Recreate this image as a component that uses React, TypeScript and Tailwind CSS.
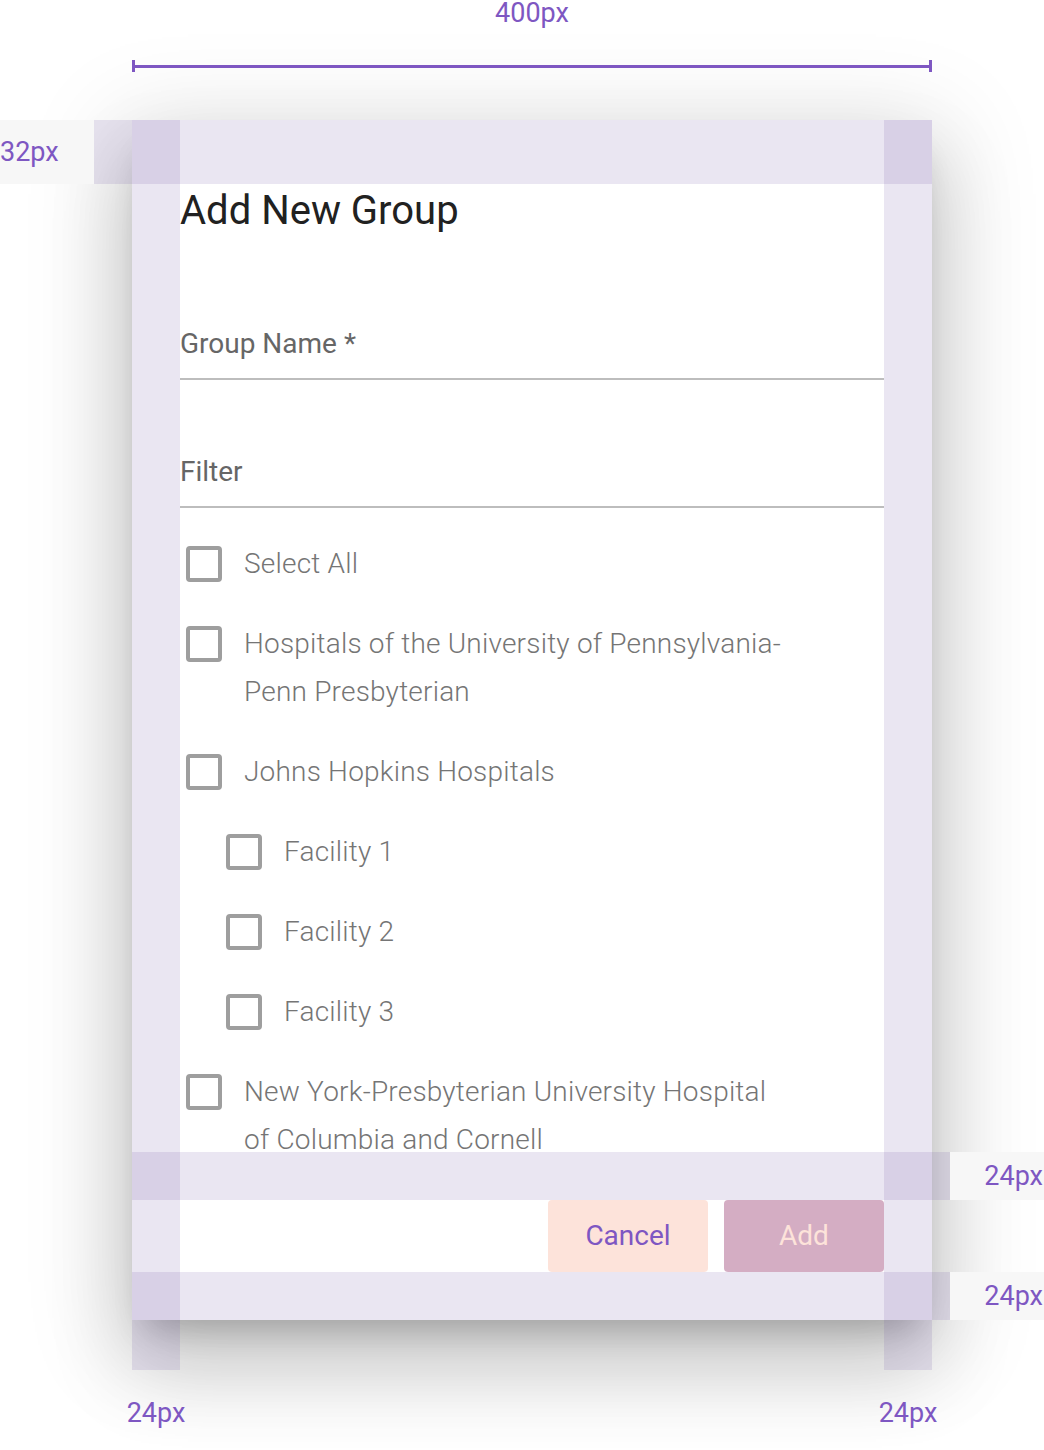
import React from 'react'

/**
 * AddGroupSpec - "Add New Group" dialog with its spacing annotations
 */

interface GroupOption {
  lines: string[]
  nested?: boolean
}

const OPTIONS: GroupOption[] = [
  { lines: ['Select All'] },
  { lines: ['Hospitals of the University of Pennsylvania-', 'Penn Presbyterian'] },
  { lines: ['Johns Hopkins Hospitals'] },
  { lines: ['Facility 1'], nested: true },
  { lines: ['Facility 2'], nested: true },
  { lines: ['Facility 3'], nested: true },
  { lines: ['New York-Presbyterian University Hospital', 'of Columbia and Cornell'] },
]

const Field: React.FC<{ label: string }> = ({ label }) => (
  <div className="flex h-[128px] flex-col justify-end border-b-2 border-[#bdbdbd]">
    <span className="mb-[18px] text-[28px] leading-[32px] text-[#666666]">{label}</span>
  </div>
)

const OptionRow: React.FC<{ option: GroupOption }> = ({ option }) => (
  <div className={`flex items-start py-4 ${option.nested ? 'pl-[40px]' : ''}`}>
    <div className="flex h-12 w-12 shrink-0 items-center justify-center">
      <div className="h-9 w-9 rounded-[4px] border-[4px] border-[#9e9e9e]" />
    </div>
    <div className="ml-4 text-[28px] font-light leading-[48px] tracking-[0.2px] text-[#757575]">
      {option.lines.map((line) => (
        <div key={line} className="whitespace-nowrap">
          {line}
        </div>
      ))}
    </div>
  </div>
)

export default function App() {
  return (
    <div className="relative h-[1450px] w-[1044px] overflow-hidden bg-white font-['Roboto','Liberation_Sans',sans-serif]">
      {/* Width spec */}
      <div className="ml-[132px] w-[800px]">
        <div className="h-[26px] text-center text-[27px] leading-[26px] text-[#7e57c2]">400px</div>
        <div className="mt-[34px] flex h-[12px] items-center">
          <div className="h-[12px] w-[3px] bg-[#7e57c2]" />
          <div className="h-[3px] flex-1 bg-[#7e57c2]" />
          <div className="h-[12px] w-[3px] bg-[#7e57c2]" />
        </div>
      </div>

      {/* Dialog */}
      <div className="ml-[132px] mt-[48px] flex h-[1200px] w-[800px] flex-col bg-white px-12 pb-12 pt-16 shadow-[0_48px_76px_6px_rgba(0,0,0,0.14),0_18px_92px_16px_rgba(0,0,0,0.12),0_22px_30px_-14px_rgba(0,0,0,0.2)]">
        <div className="min-h-0 flex-1 overflow-hidden">
          <h2 className="h-[54px] text-[40px] font-normal leading-[54px] text-[#212121]">Add New Group</h2>
          <div className="mt-[14px]">
            <Field label="Group Name *" />
            <Field label="Filter" />
          </div>
          <div className="pt-4">
            {OPTIONS.map((option) => (
              <OptionRow key={option.lines[0]} option={option} />
            ))}
          </div>
        </div>
        <div className="mt-12 flex h-[72px] justify-end gap-4">
          <button className="h-[72px] w-[160px] rounded-[4px] bg-[#fde3da] text-[28px] text-[#7e57c2]">Cancel</button>
          <button className="h-[72px] w-[160px] rounded-[4px] bg-[#d4adc3] text-[28px] text-[#fde3da]">Add</button>
        </div>
      </div>

      {/* Padding overlays */}
      <div className="absolute left-[94px] top-[120px] h-[64px] w-[838px] bg-[rgba(103,80,164,0.14)]" />
      <div className="absolute left-[132px] top-[120px] h-[1250px] w-[48px] bg-[rgba(103,80,164,0.14)]" />
      <div className="absolute left-[884px] top-[120px] h-[1250px] w-[48px] bg-[rgba(103,80,164,0.14)]" />
      <div className="absolute left-[132px] top-[1152px] h-[48px] w-[818px] bg-[rgba(103,80,164,0.14)]" />
      <div className="absolute left-[132px] top-[1272px] h-[48px] w-[818px] bg-[rgba(103,80,164,0.14)]" />

      {/* Spec labels */}
      <div className="absolute left-0 top-[120px] flex h-[64px] w-[94px] items-center bg-[#f7f7f7] text-[27px] text-[#7e57c2]">
        32px
      </div>
      <div className="absolute left-[950px] top-[1152px] flex h-[48px] w-[94px] items-center justify-end bg-[#f7f7f7] pr-[1px] text-[27px] text-[#7e57c2]">
        24px
      </div>
      <div className="absolute left-[950px] top-[1272px] flex h-[48px] w-[94px] items-center justify-end bg-[#f7f7f7] pr-[1px] text-[27px] text-[#7e57c2]">
        24px
      </div>
      <div className="absolute left-[106px] top-[1400px] w-[100px] text-center text-[27px] leading-[26px] text-[#7e57c2]">24px</div>
      <div className="absolute left-[858px] top-[1400px] w-[100px] text-center text-[27px] leading-[26px] text-[#7e57c2]">24px</div>
    </div>
  )
}
